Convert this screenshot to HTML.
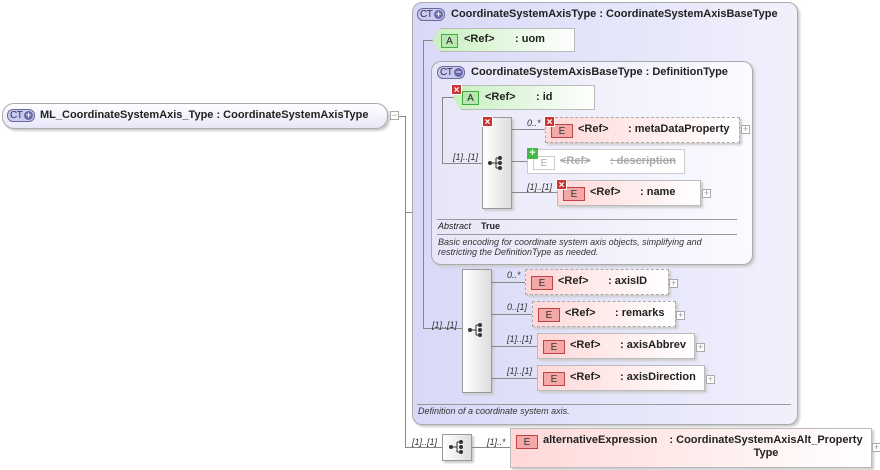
<!DOCTYPE html>
<html><head><meta charset="utf-8"><style>
*{box-sizing:border-box;margin:0;padding:0}
body{width:880px;height:470px;background:#fff;position:relative;overflow:hidden;font-family:"Liberation Sans",sans-serif;font-size:11px;color:#222}
.a{position:absolute}
.ln{position:absolute;background:#888}
.ct{position:absolute;height:13px;border:1px solid #6a6a9a;border-radius:6px;background:#c8c8f0;font-size:10px;line-height:11px;padding-left:2px;color:#334;width:28px;letter-spacing:-0.5px}
.ct b{position:absolute;right:1px;top:1px;width:9px;height:9px;border-radius:50%;background:#6a6aa8;color:#fff;font-size:9px;line-height:9px;text-align:center;letter-spacing:0}
.el{position:absolute;border:1px solid #bbb;background:linear-gradient(90deg,#ffd8d8,#fff);box-shadow:2px 2px 2px #ccc;font-weight:bold;font-size:11px}
.el.d{border:1px dashed #aaa}
.eb{position:absolute;left:5px;top:6px;width:22px;height:14px;border:1px solid #b44;background:#f4a8a8;font-weight:normal;font-size:10px;text-align:center;line-height:13px;color:#333}
.at{position:absolute;border:1px solid #bbb;background:linear-gradient(90deg,#c8f0c0,#fff);box-shadow:2px 2px 2px #ccc;font-weight:bold;font-size:11px}
.ab{position:absolute;left:8px;top:5px;width:17px;height:14px;border:1px solid #4a4;background:#b8e8b0;font-weight:normal;font-size:10px;text-align:center;line-height:13px}
.pl{position:absolute;width:9px;height:9px;border:1px solid #aaa;background:#fff;font-size:9px;line-height:7px;text-align:center;color:#999}
.sq{position:absolute;border:1px solid #999;background:linear-gradient(90deg,#fff,#ddd);box-shadow:2px 2px 2px #ccc}
.m{position:absolute;font-style:italic;font-size:9px;color:#333}
.x{position:absolute;width:11px;height:11px;background:#c33;color:#fff;font-size:10px;line-height:11px;text-align:center;font-weight:bold;border:1px solid #fff}
</style></head><body>
<div class="a" style="left:2px;top:103px;width:386px;height:26px;border:1px solid #aaa;border-radius:12px;background:linear-gradient(#fff,#e6e6f8);box-shadow:2px 2px 2px #ccc"></div>
<div class="ct" style="left:7px;top:109px">CT<b>+</b></div>
<div class="a" style="left:40px;top:109px;font-weight:bold">ML_CoordinateSystemAxis_Type : CoordinateSystemAxisType</div>
<div class="pl" style="left:390px;top:111px">−</div>
<div class="ln" style="left:399px;top:116px;width:6px;height:1px"></div>
<div class="ln" style="left:405px;top:116px;width:1px;height:331px"></div>
<div class="ln" style="left:405px;top:212px;width:8px;height:1px"></div>
<div class="ln" style="left:405px;top:447px;width:37px;height:1px"></div>
<div class="a" style="left:412px;top:2px;width:386px;height:423px;border:1px solid #aaa;border-radius:10px;background:linear-gradient(90deg,#d8d8f8,#f0f0fc);box-shadow:2px 2px 2px #ccc"></div>
<div class="ct" style="left:417px;top:8px">CT<b>+</b></div>
<div class="a" style="left:451px;top:8px;font-weight:bold">CoordinateSystemAxisType : CoordinateSystemAxisBaseType</div>
<div class="ln" style="left:423px;top:40px;width:1px;height:288px"></div>
<div class="ln" style="left:423px;top:40px;width:10px;height:1px"></div>
<div class="ln" style="left:423px;top:328px;width:39px;height:1px"></div>
<div class="at" style="left:432px;top:28px;width:143px;height:24px;clip-path:polygon(8px 0,100% 0,100% 100%,8px 100%,0 50%)"><div class="ab">A</div><span class="a" style="left:31px;top:4px">&lt;Ref&gt;</span><span class="a" style="left:82px;top:4px">: uom</span></div>
<div class="a" style="left:431px;top:61px;width:322px;height:204px;border:1px solid #aaa;border-radius:10px;background:linear-gradient(90deg,#e6e6f8,#fafaff);box-shadow:2px 2px 2px #ccc"></div>
<div class="ct" style="left:437px;top:66px">CT<b>−</b></div>
<div class="a" style="left:471px;top:66px;font-weight:bold">CoordinateSystemAxisBaseType : DefinitionType</div>
<div class="ln" style="left:442px;top:97px;width:1px;height:66px"></div>
<div class="ln" style="left:442px;top:97px;width:11px;height:1px"></div>
<div class="ln" style="left:442px;top:163px;width:40px;height:1px"></div>
<div class="m" style="left:453px;top:152px">[1]..[1]</div>
<div class="at" style="left:453px;top:85px;width:142px;height:25px;clip-path:polygon(8px 0,100% 0,100% 100%,8px 100%,0 50%)"><div class="ab">A</div><span class="a" style="left:31px;top:5px">&lt;Ref&gt;</span><span class="a" style="left:82px;top:5px">: id</span></div>
<div class="x" style="left:451px;top:84px">×</div>
<div class="sq" style="left:482px;top:117px;width:30px;height:92px"></div>
<div class="x" style="left:482px;top:116px">×</div>
<svg class="a" style="left:488px;top:155px" width="16" height="16"><circle cx="2" cy="8" r="2" fill="#333"/><line x1="2" y1="8" x2="8" y2="8" stroke="#333"/><line x1="8" y1="3" x2="8" y2="13" stroke="#333"/><line x1="8" y1="3" x2="12" y2="3" stroke="#333"/><line x1="8" y1="8" x2="12" y2="8" stroke="#333"/><line x1="8" y1="13" x2="12" y2="13" stroke="#333"/><circle cx="12" cy="3" r="2" fill="#333"/><circle cx="12" cy="8" r="2" fill="#333"/><circle cx="12" cy="13" r="2" fill="#333"/></svg>
<div class="ln" style="left:512px;top:129px;width:33px;height:1px"></div>
<div class="ln" style="left:512px;top:161px;width:15px;height:1px"></div>
<div class="ln" style="left:512px;top:192px;width:45px;height:1px"></div>
<div class="m" style="left:527px;top:118px">0..*</div>
<div class="el d" style="left:545px;top:117px;width:195px;height:26px"><div class="eb">E</div><span class="a" style="left:32px;top:5px">&lt;Ref&gt;</span><span class="a" style="left:82px;top:5px">: metaDataProperty</span></div>
<div class="x" style="left:544px;top:116px">×</div>
<div class="pl" style="left:741px;top:125px">+</div>
<div class="a" style="left:527px;top:149px;width:158px;height:25px;border:1px solid #ccc;background:#fff;color:#aaa;font-weight:bold"><div class="eb" style="background:#fff;border-color:#ccc;color:#aaa">E</div><span class="a" style="left:32px;top:5px;text-decoration:line-through">&lt;Ref&gt;</span><span class="a" style="left:82px;top:5px;text-decoration:line-through">: description</span></div>
<div class="a" style="left:527px;top:148px;width:11px;height:11px;background:#4b4;color:#fff;font-size:11px;line-height:10px;text-align:center;font-weight:bold">+</div>
<div class="m" style="left:527px;top:182px">[1]..[1]</div>
<div class="el" style="left:557px;top:180px;width:144px;height:26px"><div class="eb">E</div><span class="a" style="left:32px;top:5px">&lt;Ref&gt;</span><span class="a" style="left:82px;top:5px">: name</span></div>
<div class="x" style="left:556px;top:179px">×</div>
<div class="pl" style="left:702px;top:189px">+</div>
<div class="ln" style="left:437px;top:219px;width:300px;height:1px;background:#999"></div>
<div class="a" style="left:438px;top:221px;font-size:9px;font-style:italic">Abstract</div>
<div class="a" style="left:481px;top:221px;font-size:9px;font-weight:bold">True</div>
<div class="ln" style="left:437px;top:234px;width:300px;height:1px;background:#999"></div>
<div class="a" style="left:438px;top:237px;font-size:9px;font-style:italic;line-height:10px;color:#333">Basic encoding for coordinate system axis objects, simplifying and<br>restricting the DefinitionType as needed.</div>
<div class="m" style="left:432px;top:320px">[1]..[1]</div>
<div class="sq" style="left:462px;top:269px;width:30px;height:124px"></div>
<svg class="a" style="left:468px;top:322px" width="16" height="16"><circle cx="2" cy="8" r="2" fill="#333"/><line x1="2" y1="8" x2="8" y2="8" stroke="#333"/><line x1="8" y1="3" x2="8" y2="13" stroke="#333"/><line x1="8" y1="3" x2="12" y2="3" stroke="#333"/><line x1="8" y1="13" x2="12" y2="13" stroke="#333"/><circle cx="12" cy="3" r="2" fill="#333"/><circle cx="12" cy="8" r="2" fill="#333"/><circle cx="12" cy="13" r="2" fill="#333"/></svg>
<div class="ln" style="left:492px;top:282px;width:33px;height:1px"></div>
<div class="ln" style="left:492px;top:314px;width:40px;height:1px"></div>
<div class="ln" style="left:492px;top:346px;width:45px;height:1px"></div>
<div class="ln" style="left:492px;top:378px;width:45px;height:1px"></div>
<div class="m" style="left:507px;top:270px">0..*</div>
<div class="m" style="left:507px;top:302px">0..[1]</div>
<div class="m" style="left:507px;top:334px">[1]..[1]</div>
<div class="m" style="left:507px;top:366px">[1]..[1]</div>
<div class="el d" style="left:525px;top:269px;width:144px;height:26px"><div class="eb">E</div><span class="a" style="left:32px;top:5px">&lt;Ref&gt;</span><span class="a" style="left:82px;top:5px">: axisID</span></div>
<div class="pl" style="left:669px;top:279px">+</div>
<div class="el d" style="left:532px;top:301px;width:144px;height:26px"><div class="eb">E</div><span class="a" style="left:32px;top:5px">&lt;Ref&gt;</span><span class="a" style="left:82px;top:5px">: remarks</span></div>
<div class="pl" style="left:676px;top:311px">+</div>
<div class="el" style="left:537px;top:333px;width:158px;height:26px"><div class="eb">E</div><span class="a" style="left:32px;top:5px">&lt;Ref&gt;</span><span class="a" style="left:82px;top:5px">: axisAbbrev</span></div>
<div class="pl" style="left:696px;top:343px">+</div>
<div class="el" style="left:537px;top:365px;width:168px;height:26px"><div class="eb">E</div><span class="a" style="left:32px;top:5px">&lt;Ref&gt;</span><span class="a" style="left:82px;top:5px">: axisDirection</span></div>
<div class="pl" style="left:706px;top:375px">+</div>
<div class="ln" style="left:417px;top:404px;width:374px;height:1px;background:#999"></div>
<div class="a" style="left:418px;top:406px;font-size:9px;font-style:italic;color:#333">Definition of a coordinate system axis.</div>
<div class="m" style="left:412px;top:437px">[1]..[1]</div>
<div class="sq" style="left:442px;top:434px;width:30px;height:27px"></div>
<svg class="a" style="left:449px;top:439px" width="16" height="16"><circle cx="2" cy="8" r="2" fill="#333"/><line x1="2" y1="8" x2="8" y2="8" stroke="#333"/><line x1="8" y1="3" x2="8" y2="13" stroke="#333"/><line x1="8" y1="3" x2="12" y2="3" stroke="#333"/><line x1="8" y1="13" x2="12" y2="13" stroke="#333"/><circle cx="12" cy="3" r="2" fill="#333"/><circle cx="12" cy="8" r="2" fill="#333"/><circle cx="12" cy="13" r="2" fill="#333"/></svg>
<div class="ln" style="left:472px;top:447px;width:38px;height:1px"></div>
<div class="m" style="left:487px;top:437px">[1]..*</div>
<div class="el" style="left:510px;top:428px;width:362px;height:40px"><div class="eb">E</div><span class="a" style="left:32px;top:5px">alternativeExpression</span><span class="a" style="left:155px;top:5px;text-align:center;width:200px;line-height:13px">: CoordinateSystemAxisAlt_Property<br>Type</span></div>
<div class="pl" style="left:872px;top:443px">+</div>
</body></html>
